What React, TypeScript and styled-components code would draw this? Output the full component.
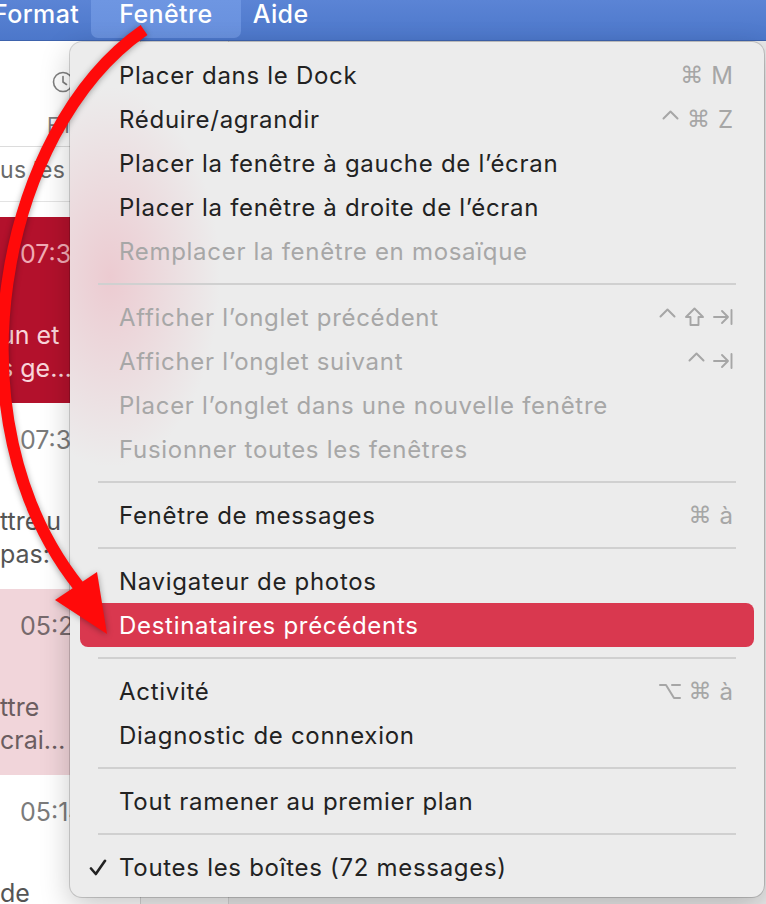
import React from 'react';
import styled, { createGlobalStyle } from 'styled-components';

const GlobalStyle = createGlobalStyle`
  html, body {
    margin: 0;
    padding: 0;
  }
  body {
    font-family: Inter, "Noto Sans", "DejaVu Sans", sans-serif;
    background: #e9e9e9;
  }
`;

const Screen = styled.div`
  position: relative;
  width: 766px;
  height: 904px;
  overflow: hidden;
  background: #e9e9e9;
`;

// barre de menus
const MenuBar = styled.div`
  height: 41px;
  display: flex;
  align-items: flex-start;
  background: linear-gradient(#5b84d5, #4c77ca);
  border-bottom: 1px solid #3e63ad;
  box-sizing: border-box;
`;

const MenuTitle = styled.div<{ $active?: boolean }>`
  height: 38px;
  box-sizing: border-box;
  display: flex;
  align-items: center;
  padding-bottom: 10px;
  margin: ${(p) => (p.$active ? '0 -8px' : '0')};
  padding-left: ${(p) => (p.$active ? '28px' : '20px')};
  padding-right: ${(p) => (p.$active ? '28px' : '20px')};
  background: ${(p) => (p.$active ? 'linear-gradient(#6e96e2, #6890dd)' : 'transparent')};
  border-radius: 0 0 7px 7px;
  color: #fff;
  font-size: 25px;
  font-weight: 500;
  letter-spacing: 0.4px;

  &:first-child {
    margin-left: -27px;
  }
`;

// fenêtre Mail derrière le menu
const WindowBody = styled.div`
  display: flex;
  height: 863px;
`;

const ListColumn = styled.div`
  width: 140px;
  background: #fff;
  border-right: 1px solid #d4d4d4;
  display: flex;
  flex-direction: column;
  overflow: hidden;

  & > * {
    flex-shrink: 0;
  }
`;

const PreviewColumn = styled.div`
  width: 87px;
  background: #f3f3f3;
  border-right: 1px solid #d4d4d4;
`;

const Toolbar = styled.div`
  height: 106px;
  border-bottom: 1px solid #dcdcdc;
  display: flex;
  align-items: flex-end;
  padding: 0 0 8px 47px;
  box-sizing: border-box;
`;

const ToolButton = styled.div`
  display: flex;
  flex-direction: column;
  align-items: flex-start;
  gap: 20px;
  color: #7f7f7f;
  font-size: 21px;

  svg {
    margin-left: 5px;
  }
`;

const FilterBar = styled.div`
  height: 55px;
  border-bottom: 1px solid #e3e3e3;
  display: flex;
  align-items: center;
  padding-bottom: 8px;
  box-sizing: border-box;
  color: #6a6a6a;
  font-size: 23px;
  letter-spacing: 0.3px;
  white-space: nowrap;
`;

const Spacer = styled.div`
  height: 15px;
`;

type RowTone = 'selected' | 'plain' | 'tinted';

const rowColors: Record<RowTone, { bg: string; time: string; text: string }> = {
  selected: { bg: '#b3112c', time: '#f1aab4', text: '#f9d5da' },
  plain: { bg: '#ffffff', time: '#7b7b7b', text: '#555555' },
  tinted: { bg: '#f1d5da', time: '#776a6d', text: '#6b5d60' },
};

const MessageRow = styled.div<{ $tone: RowTone }>`
  height: 186px;
  box-sizing: border-box;
  padding-top: 20px;
  background: ${(p) => rowColors[p.$tone].bg};
  white-space: nowrap;
`;

const MessageTime = styled.div<{ $tone: RowTone }>`
  padding-left: 20px;
  height: 34px;
  line-height: 34px;
  font-size: 25px;
  color: ${(p) => rowColors[p.$tone].time};
`;

const MessagePreview = styled.div<{ $tone: RowTone }>`
  margin-top: 48px;
  font-size: 25px;
  line-height: 33px;
  color: ${(p) => rowColors[p.$tone].text};
`;

// menu déroulant
const Dropdown = styled.div`
  position: absolute;
  left: 70px;
  top: 42px;
  width: 694px;
  box-sizing: border-box;
  padding: 11px 0 8px;
  border-radius: 12px;
  background:
    radial-gradient(ellipse 110px 190px at 40px 235px, rgba(236, 170, 182, 0.5), rgba(236, 170, 182, 0) 100%),
    #ececec;
  box-shadow:
    0 0 0 1px rgba(0, 0, 0, 0.16),
    0 10px 30px rgba(0, 0, 0, 0.22);
`;

const Item = styled.div<{ $disabled?: boolean; $highlighted?: boolean }>`
  height: 44px;
  margin: 0 10px;
  padding-right: 21px;
  display: flex;
  align-items: center;
  border-radius: 8px;
  background: ${(p) => (p.$highlighted ? '#d9384f' : 'transparent')};
  color: ${(p) => (p.$highlighted ? '#ffffff' : p.$disabled ? '#a7a7a7' : '#222222')};
`;

const CheckSlot = styled.span`
  width: 39px;
  flex-shrink: 0;
  box-sizing: border-box;
  padding-left: 9px;
  display: flex;
  align-items: center;
`;

const Label = styled.span`
  flex: 1;
  font-size: 24px;
  letter-spacing: 0.7px;
  white-space: nowrap;
`;

const Shortcut = styled.span`
  display: flex;
  align-items: center;
  gap: 8px;
  color: #a6a6a6;
  font-size: 23px;
`;

const KeyGlyph = styled.span`
  font-family: "DejaVu Sans", sans-serif;
  font-size: 23px;
`;

const KeyLetter = styled.span`
  font-size: 24px;
`;

const KeyIcon = styled.svg<{ $raised?: boolean }>`
  display: block;
  margin-top: ${(p) => (p.$raised ? '-9px' : '0')};
`;

const Separator = styled.div`
  height: 22px;
  display: flex;
  align-items: center;
  padding: 0 28px;

  &::after {
    content: '';
    flex: 1;
    height: 2px;
    background: #d0d0d0;
  }
`;

const ArrowLayer = styled.svg`
  position: absolute;
  left: 0;
  top: 0;
  pointer-events: none;
  filter: drop-shadow(0 1px 3px rgba(0, 0, 0, 0.35));
`;

type KeyName = 'cmd' | 'ctrl' | 'shift' | 'tab' | 'opt' | string;

const ShortcutKey = ({ k }: { k: KeyName }) => {
  const stroke = '#a6a6a6';
  switch (k) {
    case 'cmd':
      return <KeyGlyph>⌘</KeyGlyph>;
    case 'ctrl':
      return (
        <KeyIcon $raised width="17" height="10" viewBox="0 0 17 10">
          <path d="M1.5 8.5 L8.5 1.5 L15.5 8.5" fill="none" stroke={stroke} strokeWidth="2" strokeLinecap="round" strokeLinejoin="round" />
        </KeyIcon>
      );
    case 'shift':
      return (
        <KeyIcon width="21" height="20" viewBox="0 0 21 20">
          <path d="M10.5 1.5 L19 10 H14.5 V18 H6.5 V10 H2 Z" fill="none" stroke={stroke} strokeWidth="1.9" strokeLinejoin="round" />
        </KeyIcon>
      );
    case 'tab':
      return (
        <KeyIcon width="20" height="18" viewBox="0 0 20 18">
          <path d="M1 9 H15 M9 3 L15 9 L9 15 M18.5 2 V16" fill="none" stroke={stroke} strokeWidth="1.9" strokeLinecap="round" strokeLinejoin="round" />
        </KeyIcon>
      );
    case 'opt':
      return (
        <KeyIcon width="22" height="18" viewBox="0 0 22 18">
          <path d="M1 3 H7 L15 16 H21 M13 3 H21" fill="none" stroke={stroke} strokeWidth="2" strokeLinecap="round" strokeLinejoin="round" />
        </KeyIcon>
      );
    default:
      return <KeyLetter>{k}</KeyLetter>;
  }
};

type Entry =
  | {
      label: string;
      keys?: KeyName[];
      disabled?: boolean;
      highlighted?: boolean;
      checked?: boolean;
    }
  | 'sep';

const entries: Entry[] = [
  { label: 'Placer dans le Dock', keys: ['cmd', 'M'] },
  { label: 'Réduire/agrandir', keys: ['ctrl', 'cmd', 'Z'] },
  { label: 'Placer la fenêtre à gauche de l’écran' },
  { label: 'Placer la fenêtre à droite de l’écran' },
  { label: 'Remplacer la fenêtre en mosaïque', disabled: true },
  'sep',
  { label: 'Afficher l’onglet précédent', keys: ['ctrl', 'shift', 'tab'], disabled: true },
  { label: 'Afficher l’onglet suivant', keys: ['ctrl', 'tab'], disabled: true },
  { label: 'Placer l’onglet dans une nouvelle fenêtre', disabled: true },
  { label: 'Fusionner toutes les fenêtres', disabled: true },
  'sep',
  { label: 'Fenêtre de messages', keys: ['cmd', 'à'] },
  'sep',
  { label: 'Navigateur de photos' },
  { label: 'Destinataires précédents', highlighted: true },
  'sep',
  { label: 'Activité', keys: ['opt', 'cmd', 'à'] },
  { label: 'Diagnostic de connexion' },
  'sep',
  { label: 'Tout ramener au premier plan' },
  'sep',
  { label: 'Toutes les boîtes (72 messages)', checked: true },
];

const messages: { tone: RowTone; time: string; lines: string[] }[] = [
  { tone: 'selected', time: '07:32', lines: ['un et', 's ge…'] },
  { tone: 'plain', time: '07:30', lines: ['ttre u', 'pas:'] },
  { tone: 'tinted', time: '05:22', lines: ['ttre', 'crai…'] },
  { tone: 'plain', time: '05:14', lines: ['de'] },
];

const App = () => {
  return (
    <Screen>
      <GlobalStyle />
      <MenuBar>
        <MenuTitle>Format</MenuTitle>
        <MenuTitle $active>Fenêtre</MenuTitle>
        <MenuTitle>Aide</MenuTitle>
      </MenuBar>

      <WindowBody>
        <ListColumn>
          <Toolbar>
            <ToolButton>
              <svg width="22" height="22" viewBox="0 0 22 22">
                <circle cx="11" cy="11" r="9.5" fill="none" stroke="#7f7f7f" strokeWidth="1.6" />
                <path d="M11 5.5V11l3.5 2.5" fill="none" stroke="#7f7f7f" strokeWidth="1.6" strokeLinecap="round" />
              </svg>
              <span>Filtrer</span>
            </ToolButton>
          </Toolbar>
          <FilterBar>us les messages</FilterBar>
          <Spacer />
          {messages.map((m, i) => (
            <MessageRow key={i} $tone={m.tone}>
              <MessageTime $tone={m.tone}>{m.time}</MessageTime>
              <MessagePreview $tone={m.tone}>
                {m.lines.map((line, j) => (
                  <div key={j}>{line}</div>
                ))}
              </MessagePreview>
            </MessageRow>
          ))}
        </ListColumn>
        <PreviewColumn />
      </WindowBody>

      <Dropdown>
        {entries.map((e, i) => {
          if (e === 'sep') return <Separator key={i} />;
          return (
            <Item key={i} $disabled={e.disabled} $highlighted={e.highlighted}>
              <CheckSlot>
                {e.checked && (
                  <svg width="18" height="17" viewBox="0 0 18 17">
                    <path d="M2 9.5 L6.8 15 L16 1.8" fill="none" stroke="#222" strokeWidth="2.6" strokeLinecap="round" strokeLinejoin="round" />
                  </svg>
                )}
              </CheckSlot>
              <Label>{e.label}</Label>
              {e.keys && (
                <Shortcut>
                  {e.keys.map((k, j) => (
                    <ShortcutKey key={j} k={k} />
                  ))}
                </Shortcut>
              )}
            </Item>
          );
        })}
      </Dropdown>

      <ArrowLayer width="766" height="904" viewBox="0 0 766 904">
        <path
          d="M144 30 C 0 130, -55 420, 80 588"
          fill="none"
          stroke="#ff0a0a"
          strokeWidth="12"
          strokeLinecap="butt"
        />
        <polygon points="55,600 97,572 107,634" fill="#ff0a0a" />
      </ArrowLayer>
    </Screen>
  );
};

export default App;
